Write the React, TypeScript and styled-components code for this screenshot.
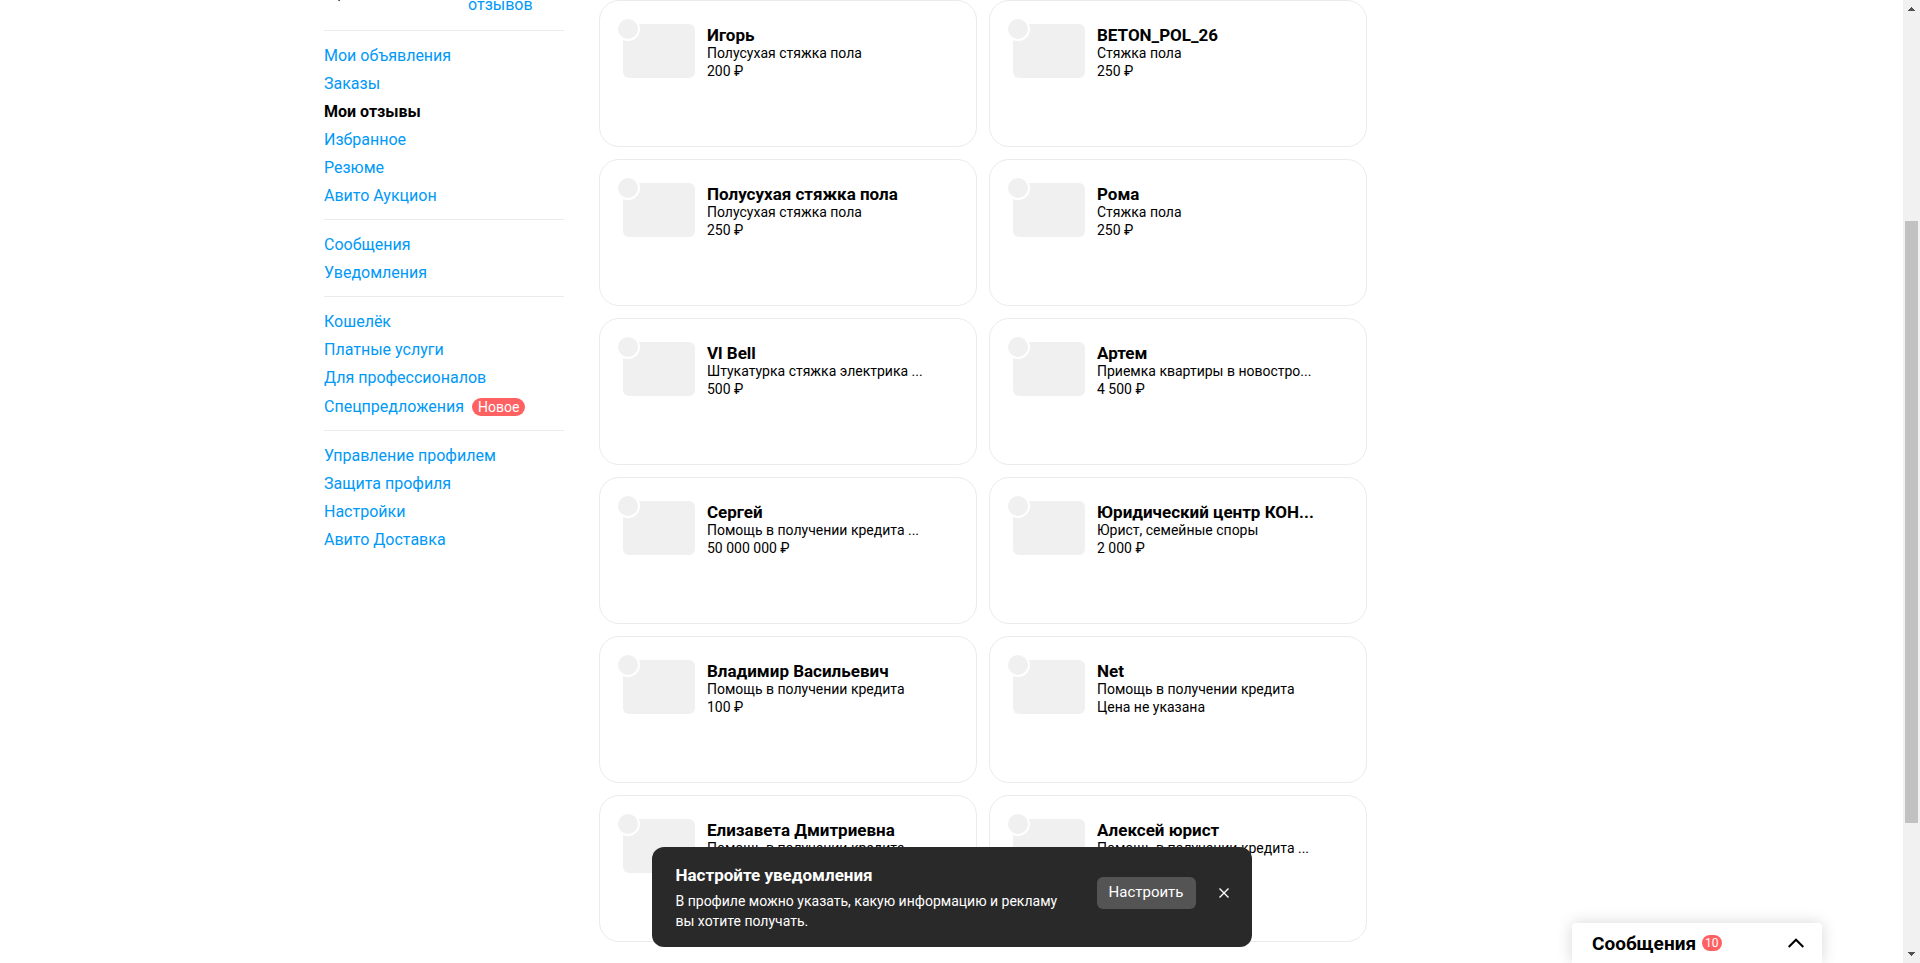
import React from "react";
import styled, { createGlobalStyle, css } from "styled-components";

const GlobalStyle = createGlobalStyle`
  *, *::before, *::after { box-sizing: border-box; }
  body {
    margin: 0;
    background: #fff;
    color: #000;
    font-family: Roboto, "Noto Sans", "Liberation Sans", sans-serif;
    font-size: 16px;
  }
`;

const Window = styled.div`
  display: flex;
  height: 100vh;
  overflow: hidden;
`;

const Viewport = styled.div`
  flex: 1;
  min-width: 0;
  position: relative;
  overflow: hidden;
`;

const Container = styled.div`
  display: flex;
  gap: 35px;
  max-width: 1255px;
  margin: 0 auto;
`;

const Sidebar = styled.aside`
  flex: 0 0 240px;
`;

const Profile = styled.div`
  display: flex;
  height: 30px;
  overflow: hidden;
  line-height: 20px;
`;

const Rating = styled.span`
  flex: 0 0 144px;
  padding-left: 14px;
  margin-top: -16px;
`;

const link = css`
  color: #0099f7;
  text-decoration: none;
`;

const ReviewsLink = styled.a`
  ${link}
  margin-top: -5px;
`;

const Group = styled.ul`
  list-style: none;
  margin: 0;
  padding: 11px 0 9px;
  border-top: 1px solid #ebebeb;
`;

const Item = styled.li`
  display: flex;
  align-items: center;
  gap: 8px;
  line-height: 28px;
`;

const NavLink = styled.a<{ $active?: boolean }>`
  ${link}
  ${(p) => p.$active && css`color: #000; font-weight: 700;`}
`;

const NewBadge = styled.span`
  margin: 6px 0 5px;
  padding: 0 6px;
  border-radius: 9px;
  background: #ff6163;
  color: #fff;
  font-size: 14px;
  line-height: 18px;
`;

const Grid = styled.main`
  flex: 0 1 768px;
  min-width: 0;
  display: grid;
  grid-template-columns: repeat(2, minmax(0, 1fr));
  grid-auto-rows: 147px;
  gap: 12px;
`;

const Card = styled.article`
  display: flex;
  gap: 12px;
  padding: 23px;
  border: 1px solid #ebebeb;
  border-radius: 20px;
`;

const Thumb = styled.div`
  position: relative;
  flex: none;
  width: 72px;
  height: 54px;
  border-radius: 6px;
  background: #f0f0f0;
`;

const Avatar = styled.span`
  position: absolute;
  top: -7px;
  left: -7px;
  width: 24px;
  height: 24px;
  border: 2px solid #fff;
  border-radius: 50%;
  background: #f0f0f0;
`;

const Info = styled.div`
  min-width: 0;
  width: 220px;
  font-size: 14px;
  line-height: 18px;
`;

const clip = css`
  margin: 0;
  overflow: hidden;
  white-space: nowrap;
  text-overflow: ellipsis;
`;

const Name = styled.h3`
  ${clip}
  padding-top: 2px;
  font-size: 17px;
  font-weight: 700;
  line-height: 18px;
`;

const Line = styled.p`
  ${clip}
`;

const Toast = styled.section`
  position: absolute;
  left: 50%;
  bottom: 16px;
  transform: translateX(-50%);
  display: flex;
  align-items: center;
  width: 600px;
  height: 100px;
  padding: 0 16px 0 24px;
  border-radius: 12px;
  background: #292929;
  color: #fff;
  font-size: 14px;
  line-height: 20px;
`;

const ToastText = styled.div`
  flex: 1;
`;

const ToastTitle = styled.h2`
  margin: 0 0 4px;
  font-size: 17px;
  font-weight: 700;
  line-height: 24px;
`;

const ToastBody = styled.p`
  margin: 0;
`;

const SetupButton = styled.button`
  width: 99px;
  height: 32px;
  margin-bottom: 8px;
  padding: 0 0 2px;
  border: 0;
  border-radius: 6px;
  background: #545454;
  color: #fff;
  font: inherit;
  font-size: 15px;
`;

const CloseButton = styled.button`
  display: flex;
  align-items: center;
  justify-content: center;
  width: 24px;
  height: 24px;
  margin: 0 0 8px 16px;
  padding: 0;
  border: 0;
  background: none;
  color: #fff;
`;

const Chat = styled.button`
  position: absolute;
  right: 81px;
  bottom: 0;
  display: flex;
  align-items: center;
  width: 250px;
  height: 40px;
  padding: 0 18px 0 20px;
  border: 0;
  border-radius: 4px 4px 0 0;
  background: #fff;
  box-shadow: 0 0 16px rgba(0, 0, 0, 0.16);
  color: #000;
  font: inherit;
  font-size: 19px;
  font-weight: 700;
`;

const Count = styled.span`
  margin: 0 auto 0 6px;
  padding: 0 3px;
  border-radius: 8px;
  background: #ff6163;
  color: #fff;
  font-size: 12px;
  font-weight: 400;
  line-height: 16px;
`;

const ScrollBar = styled.div`
  flex: 0 0 17px;
  display: flex;
  flex-direction: column;
  align-items: center;
  background: #f1f1f1;
`;

const Arrow = styled.svg`
  flex: none;
  width: 17px;
  height: 17px;
  fill: #505050;
`;

const Track = styled.div`
  flex: 1;
  display: grid;
  grid-template-rows: 204fr 602fr 123fr;
`;

const ScrollThumb = styled.div`
  grid-row: 2;
  width: 13px;
  background: #c1c1c1;
`;

type Entry = { label: string; active?: boolean; badge?: string };

const menu: Entry[][] = [
  [
    { label: "Мои объявления" },
    { label: "Заказы" },
    { label: "Мои отзывы", active: true },
    { label: "Избранное" },
    { label: "Резюме" },
    { label: "Авито Аукцион" },
  ],
  [{ label: "Сообщения" }, { label: "Уведомления" }],
  [
    { label: "Кошелёк" },
    { label: "Платные услуги" },
    { label: "Для профессионалов" },
    { label: "Спецпредложения", badge: "Новое" },
  ],
  [
    { label: "Управление профилем" },
    { label: "Защита профиля" },
    { label: "Настройки" },
    { label: "Авито Доставка" },
  ],
];

const cards: [string, string, string][] = [
  ["Игорь", "Полусухая стяжка пола", "200 ₽"],
  ["BETON_POL_26", "Стяжка пола", "250 ₽"],
  ["Полусухая стяжка пола", "Полусухая стяжка пола", "250 ₽"],
  ["Рома", "Стяжка пола", "250 ₽"],
  ["Vl Bell", "Штукатурка стяжка электрика ...", "500 ₽"],
  ["Артем", "Приемка квартиры в новостро...", "4 500 ₽"],
  ["Сергей", "Помощь в получении кредита ...", "50 000 000 ₽"],
  ["Юридический центр КОН...", "Юрист, семейные споры", "2 000 ₽"],
  ["Владимир Васильевич", "Помощь в получении кредита", "100 ₽"],
  ["Net", "Помощь в получении кредита", "Цена не указана"],
  ["Елизавета Дмитриевна", "Помощь в получении кредита", ""],
  ["Алексей юрист", "Помощь в получении кредита ...", ""],
];

export default function App() {
  return (
    <>
      <GlobalStyle />
      <Window>
        <Viewport>
          <Container>
            <Sidebar>
              <Profile>
                <Rating>,</Rating>
                <ReviewsLink href="#reviews">отзывов</ReviewsLink>
              </Profile>
              <nav>
                {menu.map((group, i) => (
                  <Group key={i}>
                    {group.map((item) => (
                      <Item key={item.label}>
                        <NavLink href="#" $active={item.active}>{item.label}</NavLink>
                        {item.badge && <NewBadge>{item.badge}</NewBadge>}
                      </Item>
                    ))}
                  </Group>
                ))}
              </nav>
            </Sidebar>
            <Grid>
              {cards.map(([name, service, price]) => (
                <Card key={name}>
                  <Thumb><Avatar /></Thumb>
                  <Info>
                    <Name>{name}</Name>
                    <Line>{service}</Line>
                    {price && <Line>{price}</Line>}
                  </Info>
                </Card>
              ))}
            </Grid>
          </Container>
          <Toast>
            <ToastText>
              <ToastTitle>Настройте уведомления</ToastTitle>
              <ToastBody>
                В профиле можно указать, какую информацию и рекламу
                <br />
                вы хотите получать.
              </ToastBody>
            </ToastText>
            <SetupButton type="button">Настроить</SetupButton>
            <CloseButton type="button" aria-label="Закрыть">
              <svg width="10" height="10" viewBox="0 0 10 10" fill="none" stroke="currentColor" strokeWidth="1.4">
                <path d="M0.5 0.5l9 9M9.5 0.5l-9 9" />
              </svg>
            </CloseButton>
          </Toast>
          <Chat type="button">
            Сообщения
            <Count>10</Count>
            <svg width="16" height="10" viewBox="0 0 16 10" fill="none" stroke="currentColor" strokeWidth="2">
              <path d="M0.7 9L8 1.7L15.3 9" />
            </svg>
          </Chat>
        </Viewport>
        <ScrollBar aria-hidden="true">
          <Arrow viewBox="0 0 17 17"><path d="M5 11h7v-1h-1v-1h-1v-1h-1v-1h-1v1h-1v1h-1v1h-1z" /></Arrow>
          <Track><ScrollThumb /></Track>
          <Arrow viewBox="0 0 17 17"><path d="M5 6h7v1h-1v1h-1v1h-1v1h-1v-1h-1v-1h-1v-1h-1z" /></Arrow>
        </ScrollBar>
      </Window>
    </>
  );
}
